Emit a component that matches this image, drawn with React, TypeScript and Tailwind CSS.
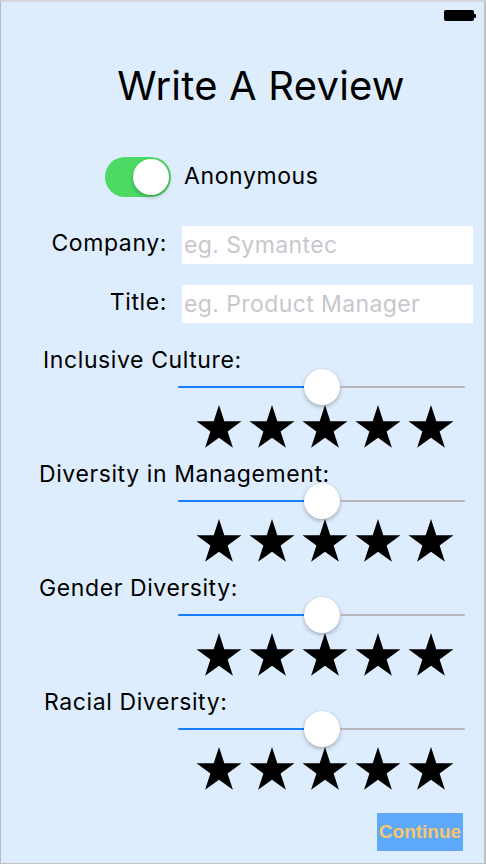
import React from 'react';

const sections = [
  { label: 'Inclusive Culture:', pad: 'pl-[42px]' },
  { label: 'Diversity in Management:', pad: 'pl-[38px]' },
  { label: 'Gender Diversity:', pad: 'pl-[38px]' },
  { label: 'Racial Diversity:', pad: 'pl-[43px]' },
];

const Star: React.FC = () => (
  <svg width="46" height="43" viewBox="0 0 46 43">
    <polygon
      points="23,0 28.31,16.35 45.5,16.35 31.6,26.45 36.91,42.8 23,32.7 9.09,42.8 14.4,26.45 0.5,16.35 17.69,16.35"
      fill="#000"
    />
  </svg>
);

const Slider: React.FC = () => (
  <div className="flex items-center h-[36px] w-[287px] ml-[177px] -mt-[1px]">
    <div className="h-[2px] w-[126px] bg-[#157efb] rounded-l-full" />
    <div className="w-[36px] h-[36px] rounded-full bg-white shadow-[0_2px_4px_rgba(0,0,0,0.25),0_0_1px_rgba(0,0,0,0.2)] shrink-0" />
    <div className="h-[2px] flex-1 bg-[#b6b6b6] rounded-r-full" />
  </div>
);

export default function App() {
  return (
    <div className="w-[486px] h-[866px] bg-white">
      <div className="w-[486px] h-[864px] bg-[#ddedfd] border-l border-t-2 border-r-2 border-b border-l-[#bdbdbd] border-t-[#d4d6d8] border-r-[#c2c2c2] border-b-[#c2c2c2] font-['Inter',sans-serif] text-black flex flex-col">
        {/* status bar */}
        <div className="flex justify-end pr-[8px] mt-[8px] h-[11px]">
          <div className="flex items-center">
            <div className="w-[30px] h-[11px] bg-black rounded-[2px]" />
            <div className="w-[2px] h-[4px] bg-black rounded-r-[1px]" />
          </div>
        </div>

        <h1 className="pl-[37px] text-center text-[40px] leading-[48px] mt-[41px] font-normal tracking-[0.2px]">Write A Review</h1>

        <div className="flex items-center pl-[104px] mt-[47px] h-[40px]">
          <div className="w-[66px] h-[40px] rounded-full bg-[#4cd964] flex items-center justify-end pr-[2px]">
            <div className="w-[36px] h-[36px] rounded-full bg-white shadow-[0_2px_4px_rgba(0,0,0,0.25)]" />
          </div>
          <span className="ml-[13px] text-[23px] leading-[26px] tracking-[0.6px] -mt-[3px]">Anonymous</span>
        </div>

        <div className="grid grid-cols-[166px_291px] gap-x-[15px] gap-y-[21px] mt-[29px] items-center">
          <span className="text-right text-[23px] leading-[26px] tracking-[0.6px] -mt-[4px]">Company:</span>
          <div className="h-[38px] bg-white flex items-center pl-[2px] text-[23px] tracking-[0.4px] text-[#c7c7cd]">eg. Symantec</div>
          <span className="text-right text-[23px] leading-[26px] tracking-[0.6px] -mt-[4px]">Title:</span>
          <div className="h-[38px] bg-white flex items-center pl-[2px] text-[23px] tracking-[0.4px] text-[#c7c7cd]">eg. Product Manager</div>
        </div>

        <div className="flex flex-col gap-[17px] mt-[27px]">
          {sections.map((s, i) => (
            <div key={i} className="flex flex-col">
              <div className={`${s.pad} text-[23px] leading-[20px] h-[20px] tracking-[0.6px]`}>{s.label}</div>
              <Slider />
              <div className="flex gap-[7px] ml-[195px] h-[42px]">
                {[0, 1, 2, 3, 4].map((k) => (
                  <Star key={k} />
                ))}
              </div>
            </div>
          ))}
        </div>

        <div className="flex justify-end pr-[21px] mt-[24px]">
          <button className="w-[86px] h-[38px] bg-[#5ea9fb] text-[#f7c66b] font-['Liberation_Sans',sans-serif] font-bold text-[19px] flex items-center justify-center">
            Continue
          </button>
        </div>
      </div>
    </div>
  );
}
